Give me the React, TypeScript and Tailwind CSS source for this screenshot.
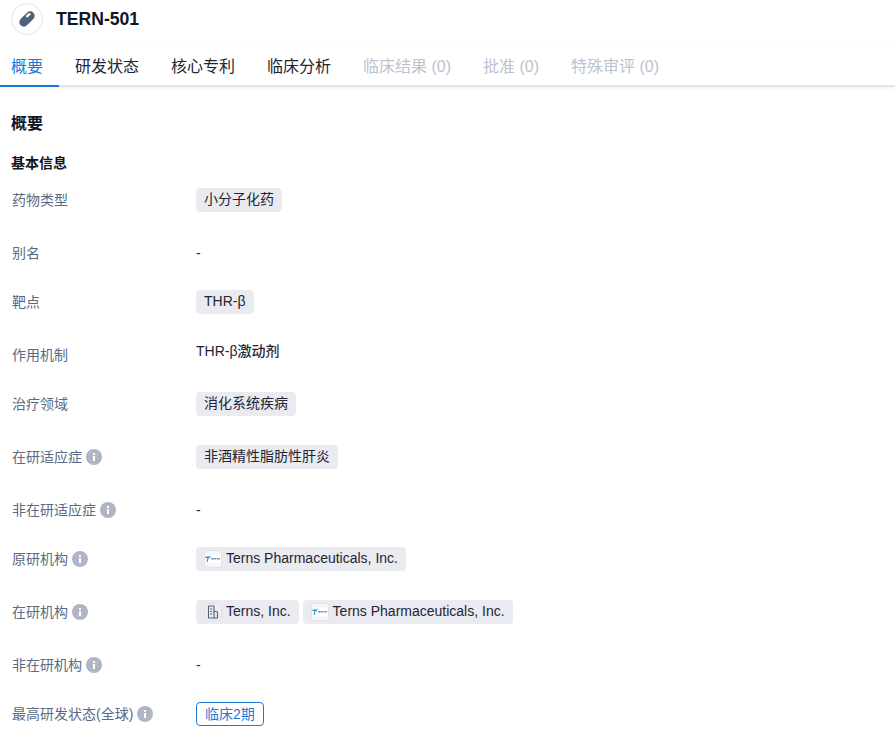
import type {ReactNode} from "react";

const tabs = [
  {label: "概要", active: true},
  {label: "研发状态"},
  {label: "核心专利"},
  {label: "临床分析"},
  {label: "临床结果 (0)", disabled: true},
  {label: "批准 (0)", disabled: true},
  {label: "特殊审评 (0)", disabled: true}
];

const PillIcon = () => (
  <svg width="20" height="20" viewBox="0 0 20 20">
    <g transform="rotate(-45 10 10)">
      <rect x="1" y="5.5" width="18" height="9" rx="4.5" fill="#4f5f7c" />
      <path d="M11 7h3.6a1.6 1.6 0 0 1 1.6 1.6V9.4H11z" fill="#ffffff" />
    </g>
  </svg>
);

const InfoIcon = () => (
  <svg width="16" height="16" viewBox="0 0 16 16" className="shrink-0">
    <circle cx="8" cy="8" r="8" fill="#afb5c4" />
    <rect x="7" y="7" width="2" height="5" fill="#ffffff" />
    <rect x="7" y="4" width="2" height="2" fill="#ffffff" />
  </svg>
);

const LogoIcon = () => (
  <span className="flex h-[18px] w-[18px] shrink-0 items-center justify-center rounded-[3px] border border-[#e1e3ea] bg-[#f6f7f9]">
    <svg width="16" height="8" viewBox="0 0 16 8">
      <rect width="16" height="8" fill="#ffffff" />
      <path d="M0.5 1.5H6L4.6 3H3.6L2.6 7H1.6L2.4 3H0.5z" fill="#1795d4" />
      <rect x="6.5" y="3" width="2" height="1.5" fill="#5f7186" />
      <rect x="9" y="3" width="2.5" height="1.5" fill="#8d9aa8" />
      <rect x="12" y="3" width="3" height="1.5" fill="#8d9aa8" />
    </svg>
  </span>
);

const BuildingIcon = () => (
  <span className="flex h-[18px] w-[18px] shrink-0 items-center justify-center rounded-[3px] border border-[#e1e3ea] bg-[#eceef2]">
    <svg width="12" height="14" viewBox="0 0 12 14" fill="none" stroke="#4f5f7c" strokeWidth="1.1">
      <rect x="1.5" y="1" width="5.5" height="12" rx="0.5" />
      <path d="M7 6.5h2.5a1 1 0 0 1 1 1V13H7" />
      <path d="M3.2 4h2M3.2 6.5h2M3.2 9h2" />
    </svg>
  </span>
);

const Tag = ({children, icon}: {children: ReactNode; icon?: ReactNode}) => (
  <span className="inline-flex h-6 items-center gap-1 whitespace-nowrap rounded bg-[#e9ebf0] px-2 text-[14px] text-[#1f2533]">
    {icon}
    <span className="-translate-y-px">{children}</span>
  </span>
);

const Dash = () => <span className="text-[14px] leading-6 text-[#1f2533]">-</span>;

type RowProps = {
  label: string;
  info?: boolean;
  tall?: boolean;
  children: ReactNode;
};

const Row = ({label, info, tall, children}: RowProps) => (
  <div className={`flex items-start ${tall ? "h-[53px]" : "h-[49px]"}`}>
    <div className="flex h-6 w-[184px] shrink-0 items-center gap-1 text-[14px] text-[#5a6a85]">
      <span className="whitespace-nowrap">{label}</span>
      {info && <InfoIcon />}
    </div>
    <div className="flex items-start gap-1">{children}</div>
  </div>
);

export default function App() {
  return (
    <div
      className="h-[738px] w-[895px] overflow-hidden bg-white"
      style={{fontFamily: '"Liberation Sans", "Noto Sans CJK SC", sans-serif'}}
    >
      <div className="flex h-[45px] items-start gap-[13px] pl-[11px] pt-[3px]">
        <div className="flex h-8 w-8 items-center justify-center rounded-full border border-[#e1e3ea]">
          <PillIcon />
        </div>
        <h1 className="text-[17.6px] font-bold leading-8 text-[#0f1626]">TERN-501</h1>
      </div>

      <div className="flex h-[42px] items-stretch border-b-2 border-[#e4e6ec] shadow-[0_1px_3px_rgba(30,40,60,0.08)]">
        {tabs.map((tab, i) => (
          <div
            key={tab.label}
            className={`-mb-[2px] flex items-center whitespace-nowrap border-b-2 pt-1 pr-4 text-[16px] ${
              i === 0 ? "pl-[11px]" : "pl-4"
            } ${tab.active ? "border-[#1f78d8] text-[#1f78d8]" : "border-transparent"} ${
              tab.disabled ? "text-[#bcc2ce]" : tab.active ? "" : "text-[#1f2533]"
            }`}
          >
            {tab.label}
          </div>
        ))}
      </div>

      <div className="pl-3">
        <h2 className="-ml-px mt-[25px] text-[16px] font-bold leading-6 text-[#0f1626]">概要</h2>
        <h3 className="-ml-px mt-[15px] text-[14px] font-bold leading-6 text-[#0f1626]">基本信息</h3>
        <div className="mt-[13px]">
          <Row label="药物类型" tall>
            <Tag>小分子化药</Tag>
          </Row>
          <Row label="别名">
            <Dash />
          </Row>
          <Row label="靶点" tall>
            <Tag>THR-β</Tag>
          </Row>
          <Row label="作用机制">
            <span className="text-[14px] font-medium leading-4 text-[#1f2533]">THR-β激动剂</span>
          </Row>
          <Row label="治疗领域" tall>
            <Tag>消化系统疾病</Tag>
          </Row>
          <Row label="在研适应症" info tall>
            <Tag>非酒精性脂肪性肝炎</Tag>
          </Row>
          <Row label="非在研适应症" info>
            <Dash />
          </Row>
          <Row label="原研机构" info tall>
            <Tag icon={<LogoIcon />}>Terns Pharmaceuticals, Inc.</Tag>
          </Row>
          <Row label="在研机构" info tall>
            <Tag icon={<BuildingIcon />}>Terns, Inc.</Tag>
            <Tag icon={<LogoIcon />}>Terns Pharmaceuticals, Inc.</Tag>
          </Row>
          <Row label="非在研机构" info>
            <Dash />
          </Row>
          <Row label="最高研发状态(全球)" info>
            <span className="inline-flex h-6 items-center whitespace-nowrap rounded border border-[#1f78d8] px-2 text-[14px] text-[#1f78d8]">
              临床2期
            </span>
          </Row>
        </div>
      </div>
    </div>
  );
}
